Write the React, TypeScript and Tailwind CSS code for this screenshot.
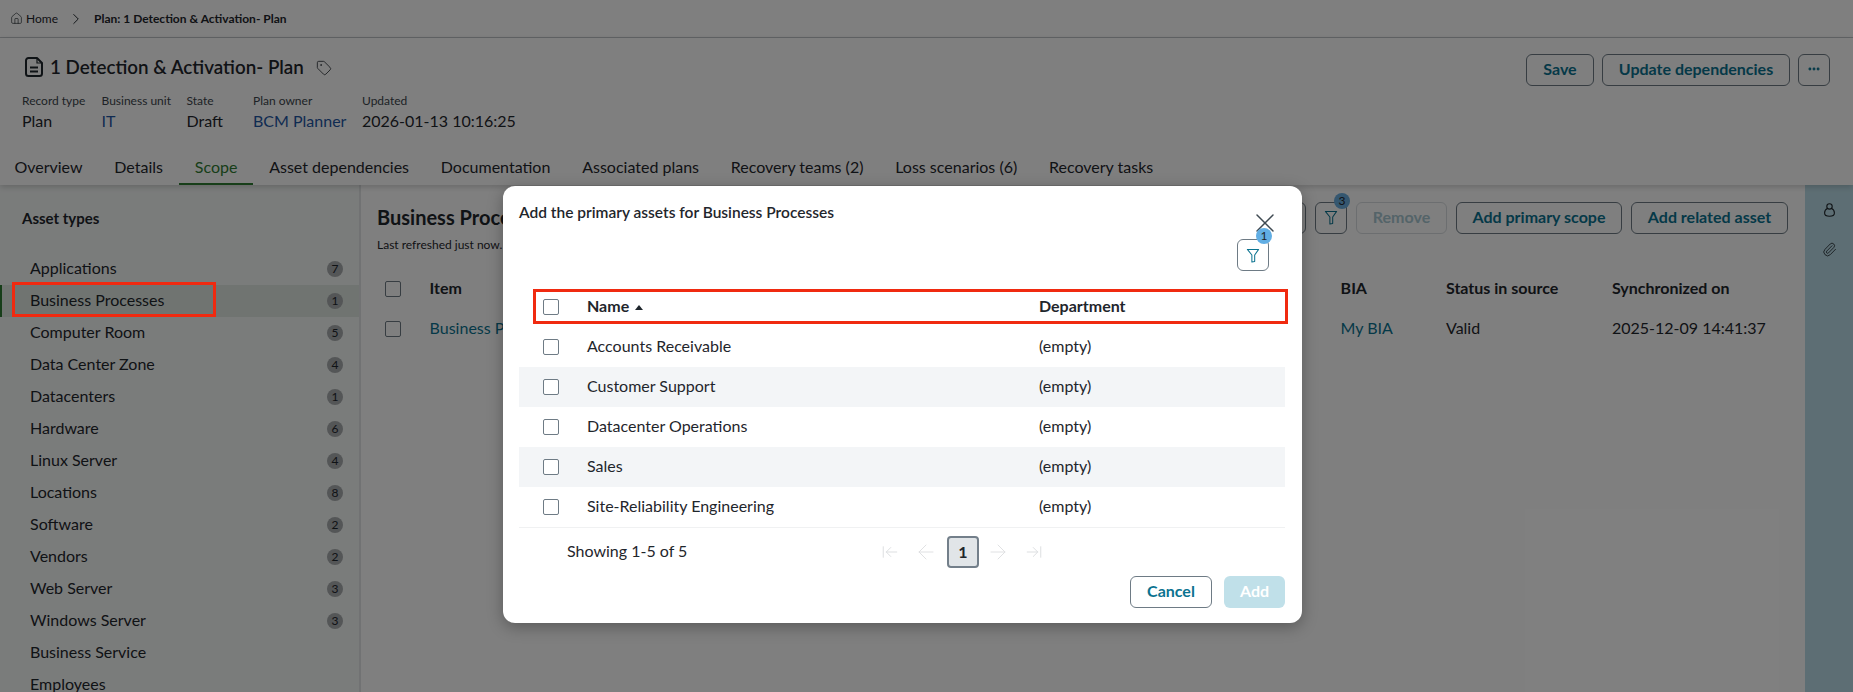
import React from 'react';
import { House, ChevronRight, Tag, MoreHorizontal, X, ArrowLeft, ArrowRight, ArrowLeftToLine, ArrowRightToLine, Paperclip } from 'lucide-react';

const assetTypes = [
  { name: 'Applications', count: 7 },
  { name: 'Business Processes', count: 1 },
  { name: 'Computer Room', count: 5 },
  { name: 'Data Center Zone', count: 4 },
  { name: 'Datacenters', count: 1 },
  { name: 'Hardware', count: 6 },
  { name: 'Linux Server', count: 4 },
  { name: 'Locations', count: 8 },
  { name: 'Software', count: 2 },
  { name: 'Vendors', count: 2 },
  { name: 'Web Server', count: 3 },
  { name: 'Windows Server', count: 3 },
  { name: 'Business Service' },
  { name: 'Employees' },
];

const tabs = ['Overview', 'Details', 'Scope', 'Asset dependencies', 'Documentation', 'Associated plans', 'Recovery teams (2)', 'Loss scenarios (6)', 'Recovery tasks'];

const meta = [
  { label: 'Record type', value: 'Plan', width: 'w-[79.5px]' },
  { label: 'Business unit', value: 'IT', link: true, width: 'w-[85px]' },
  { label: 'State', value: 'Draft', width: 'w-[66.5px]' },
  { label: 'Plan owner', value: 'BCM Planner', link: true, width: 'w-[109px]' },
  { label: 'Updated', value: '2026-01-13 10:16:25', width: '' },
];

const rows = ['Accounts Receivable', 'Customer Support', 'Datacenter Operations', 'Sales', 'Site-Reliability Engineering'];

const Funnel = ({ className }: { className: string }) => (
  <svg viewBox="0 0 14 16" fill="none" stroke="currentColor" strokeWidth="1.1" className={className}>
    <path d="M1 1.5h12L8.8 7.5v7L5.8 15V7.5L1 1.5Z" strokeLinejoin="round" />
  </svg>
);

const DocIcon = () => (
  <svg viewBox="0 0 18 20" fill="none" stroke="currentColor" strokeWidth="2" className="w-[18px] h-[20px] shrink-0">
    <path d="M3.5 1H12l5 5v10.5a2.5 2.5 0 0 1-2.5 2.5h-11A2.5 2.5 0 0 1 1 16.5v-13A2.5 2.5 0 0 1 3.5 1Z" strokeLinejoin="round" />
    <path d="M12 1v5h5" strokeWidth="1.2" />
    <path d="M5 10.5h8M5 14.5h8" strokeWidth="2.2" />
  </svg>
);

const UserIcon = () => (
  <svg viewBox="0 0 11 14" fill="none" stroke="currentColor" strokeWidth="1.1" className="w-[11px] h-[14px]">
    <circle cx="5.5" cy="3.4" r="2.7" />
    <path d="M3.4 5.6C1.6 6.4.6 8 .6 10c0 2 1.4 3.3 4.9 3.3s4.9-1.3 4.9-3.3c0-2-1-3.6-2.8-4.4" />
  </svg>
);

const Checkbox = () => (
  <span className="block w-4 h-4 rounded-[2px] border border-[#6e7b85] bg-white shrink-0" />
);

const OutlineButton = ({ children, className = '' }: { children?: React.ReactNode; className?: string }) => (
  <button className={`h-8 rounded-md border border-[#6e7b85] bg-white text-base font-bold text-[#0b7390] flex items-center justify-center pb-[2px] ${className}`}>
    {children}
  </button>
);

export default function App() {
  return (
    <div className="relative h-[692px] w-[1853px] overflow-hidden bg-white text-[#1f262c] font-['Lato','Open_Sans',sans-serif]">
      {/* breadcrumb */}
      <div className="h-[38px] border-b border-[#c4c8cc] flex items-center pl-[10px] text-xs">
        <House className="w-[13px] h-[13px] mr-[3px]" strokeWidth={1.2} />
        <span>Home</span>
        <ChevronRight className="w-[18px] h-[18px] mx-[9px]" strokeWidth={1.3} />
        <span className="font-bold">Plan: 1 Detection &amp; Activation- Plan</span>
      </div>

      {/* record header */}
      <div className="relative h-[147px] shadow-[0_2px_6px_rgba(0,0,0,0.18)] z-10 bg-white">
        <div className="flex justify-between pl-[25px] pr-[23px] pt-[16px]">
          <div className="flex items-center h-[26px]">
            <DocIcon />
            <h1 className="ml-[7px] text-[18.8px] font-semibold leading-[26px]">1 Detection &amp; Activation- Plan</h1>
            <Tag className="w-[16px] h-[16px] ml-[12px] mt-[2px]" strokeWidth={1.2} />
          </div>
          <div className="flex gap-2">
            <OutlineButton className="w-[68px]">Save</OutlineButton>
            <OutlineButton className="w-[188px]">Update dependencies</OutlineButton>
            <OutlineButton className="w-8"><MoreHorizontal className="w-[14px] h-[14px]" strokeWidth={3} /></OutlineButton>
          </div>
        </div>
        <div className="flex pl-[22px] mt-[7px]">
          {meta.map((m) => (
            <div key={m.label} className={m.width}>
              <div className="text-xs leading-[16px] text-[#3c454c]">{m.label}</div>
              <div className={`text-base leading-[24px] ${m.link ? 'text-[#1f57a4]' : ''}`}>{m.value}</div>
            </div>
          ))}
        </div>
        <div className="flex absolute left-[-1.5px] bottom-0 h-[34px]">
          {tabs.map((t) => (
            <div key={t} className={`px-[15.9px] flex items-center text-base border-b-2 ${t === 'Scope' ? 'border-[#2f7d32] text-[#2f7d32]' : 'border-transparent'}`}>
              {t}
            </div>
          ))}
        </div>
      </div>

      {/* body */}
      <div className="flex h-[507px]">
        <aside className="w-[361px] shrink-0 bg-[#f5f8f7] border-r-2 border-[#e2e5e6]">
          <h2 className="pl-[22px] pt-[23px] text-[15px] font-bold leading-5">Asset types</h2>
          <ul className="mt-[25px]">
            {assetTypes.map((a) => {
              const active = a.name === 'Business Processes';
              return (
                <li key={a.name} className={`h-8 flex items-center justify-between pr-4 text-base ${active ? 'bg-[#e0e9e2] border-l-2 border-[#2f7d32] pl-[28px]' : 'pl-[30px]'}`}>
                  <span className="mb-[2px]">{a.name}</span>
                  {a.count && (
                    <span className="w-4 h-4 rounded-full bg-[#a8acae] text-xs flex items-center justify-center">{a.count}</span>
                  )}
                </li>
              );
            })}
          </ul>
        </aside>

        <main className="flex-1 pl-[16px] bg-white">
          <div className="flex justify-between pt-[17px] pr-[17px]">
            <div>
              <h2 className="text-xl font-bold leading-7 mt-px">Business Processes</h2>
              <p className="text-xs mt-[6px] leading-[16px]">Last refreshed just now.</p>
            </div>
            <div className="flex gap-[9px]">
              <OutlineButton className="w-8" />
              <OutlineButton className="w-8 relative">
                <Funnel className="w-[14px] h-[15px]" />
                <span className="absolute -top-[10px] right-[-4px] w-4 h-4 rounded-full bg-[#6aaee0] text-xs font-normal text-[#1f262c] flex items-center justify-center">3</span>
              </OutlineButton>
              <button className="h-8 w-[91px] rounded-md border border-[#d9dde0] text-base font-bold text-[#a9c8d2] pb-[2px]">Remove</button>
              <OutlineButton className="w-[166px]">Add primary scope</OutlineButton>
              <OutlineButton className="w-[157px]">Add related asset</OutlineButton>
            </div>
          </div>
          <div className="mt-[20px] pl-[8px] grid grid-cols-[44.6px_911px_105.4px_166px_1fr] items-center text-base">
            <div className="h-8 flex items-center"><Checkbox /></div>
            <div className="font-bold mb-[2px]">Item</div>
            <div className="font-bold mb-[2px]">BIA</div>
            <div className="font-bold mb-[2px]">Status in source</div>
            <div className="font-bold mb-[2px]">Synchronized on</div>
            <div className="h-[48px] flex items-center"><Checkbox /></div>
            <div className="text-[#0b7390] mb-[2px]">Business Process</div>
            <div className="text-[#0b7390] mb-[2px]">My BIA</div>
            <div className="mb-[2px]">Valid</div>
            <div className="mb-[2px]">2025-12-09 14:41:37</div>
          </div>
        </main>

        <div className="w-[48px] shrink-0 bg-[#bbdde8] flex flex-col items-center text-[#1f262c]">
          <div className="mt-[18px] h-[14px]"><UserIcon /></div>
          <Paperclip className="w-[15px] h-[15px] mt-[25px]" strokeWidth={1.3} />
        </div>
      </div>

      {/* dim layer */}
      <div className="absolute inset-0 z-20 bg-black/50" />

      {/* red highlight over the sidebar row */}
      <div className="absolute z-30 left-[12px] top-[282px] w-[204px] h-[35px] border-[3px] border-[#f02a10]" />

      {/* modal */}
      <div className="absolute z-30 left-[503px] top-[186px] w-[799px] h-[437px] rounded-xl bg-white pl-4 pr-[17px] shadow-[0_4px_16px_rgba(0,0,0,0.3)]">
        <div className="relative h-[101px]">
          <h2 className="pt-[15px] text-[15.5px] font-semibold leading-[22px]">Add the primary assets for Business Processes</h2>
          <X className="absolute left-[730px] top-[21px] w-[32px] h-[32px] text-[#3f4a52]" strokeWidth={1.1} />
          <button className="absolute left-[718px] top-[53px] w-8 h-8 rounded-md border border-[#6e7b85] flex items-center justify-center text-[#0b7390]">
            <Funnel className="w-[14px] h-[15px]" />
            <span className="absolute -top-[12px] right-[-4px] w-4 h-4 rounded-full bg-[#61aee4] text-xs text-[#1f262c] flex items-center justify-center">1</span>
          </button>
        </div>

        <div className="relative flex items-center h-[40px] pl-[24px] font-bold">
          <Checkbox />
          <span className="ml-[28px] mb-[2px]">Name</span>
          <span className="ml-[6px] w-0 h-0 border-x-[4px] border-x-transparent border-b-[5px] border-b-[#1f262c]" />
          <span className="absolute left-[520px] mb-[2px]">Department</span>
          <div className="absolute left-[14px] -right-[3px] top-[2px] h-[35px] border-[3px] border-[#f02a10]" />
        </div>

        <div className="border-b border-[#f0f1f2]">
          {rows.map((r, i) => (
            <div key={r} className={`flex items-center h-[40px] pl-[24px] ${i % 2 === 1 ? 'bg-[#f3f5f7]' : ''}`}>
              <Checkbox />
              <span className="ml-[28px] w-[452px] mb-[2px]">{r}</span>
              <span className="mb-[2px]">(empty)</span>
            </div>
          ))}
        </div>

        <div className="relative flex items-center h-[48px] pl-[48px]">
          <span className="mb-[2px]">Showing 1-5 of 5</span>
          <div className="absolute left-[362px] top-0 h-[48px] flex items-center text-[#dcdee0]">
            <ArrowLeftToLine className="w-[18px] h-[18px]" strokeWidth={1.3} />
            <ArrowLeft className="w-6 h-6 ml-[15px]" strokeWidth={0.9} />
            <span className="ml-[9px] w-8 h-8 rounded-[4px] border-2 border-[#737f8a] bg-[#e1e5e8] text-[#1f262c] font-bold flex items-center justify-center">1</span>
            <ArrowRight className="w-6 h-6 ml-[7px]" strokeWidth={0.9} />
            <ArrowRightToLine className="w-[18px] h-[18px] ml-[15px]" strokeWidth={1.3} />
          </div>
        </div>

        <div className="flex justify-end gap-3">
          <button className="w-[82px] h-8 rounded-md border border-[#6e7b85] text-base font-bold text-[#0b7390] pb-[2px]">Cancel</button>
          <button className="w-[61px] h-8 rounded-md bg-[#c0e0e9] text-base font-bold text-white pb-[2px]">Add</button>
        </div>
      </div>
    </div>
  );
}
